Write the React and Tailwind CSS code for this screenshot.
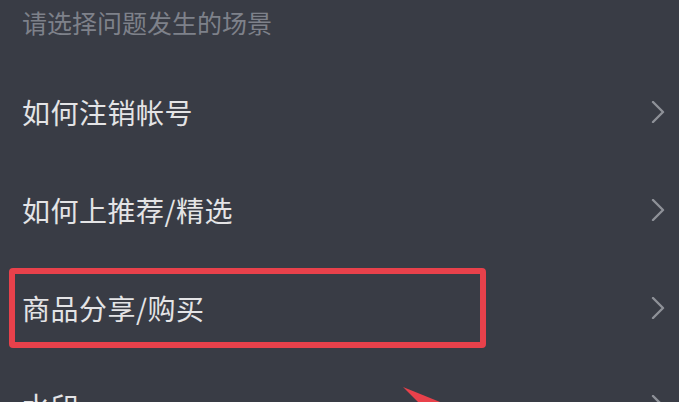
import React from "react";

const Chevron = () => (
  <svg width="14" height="22" viewBox="0 0 14 22" className="shrink-0">
    <polyline points="2,1 12,11 2,21" fill="none" stroke="#8e9198" strokeWidth="2.4" strokeLinecap="round" strokeLinejoin="round" />
  </svg>
);

const Row = ({ label, boxed }) => (
  <div className="relative flex h-[98px] items-center justify-between pl-[22px] pr-[14px]">
    <span className="text-[28px] leading-[28px] tracking-[0.5px] text-[#e4e4e6]">{label}</span>
    <Chevron />
    {boxed && (
      <div className="pointer-events-none absolute left-[9px] top-[9px] h-[80px] w-[477px] rounded-[4px] border-[6px] border-[#e8414b]" />
    )}
  </div>
);

export default function App() {
  return (
    <div
      className="relative h-[402px] w-[679px] overflow-hidden bg-[#393c45]"
      style={{ fontFamily: '"Noto Sans CJK SC", "Noto Sans", sans-serif' }}
    >
      <div className="h-[63px] pl-[22px] pt-[10px]">
        <span className="block text-[25px] leading-[25px] text-[#7e818a]">请选择问题发生的场景</span>
      </div>
      <Row label="如何注销帐号" />
      <Row label="如何上推荐/精选" />
      <Row label="商品分享/购买" boxed />
      <Row label="水印" />
      <svg className="absolute left-0 top-0" width="679" height="402" viewBox="0 0 679 402">
        <polygon points="403,387 440,402 418,402" fill="#e8414b" />
      </svg>
    </div>
  );
}
